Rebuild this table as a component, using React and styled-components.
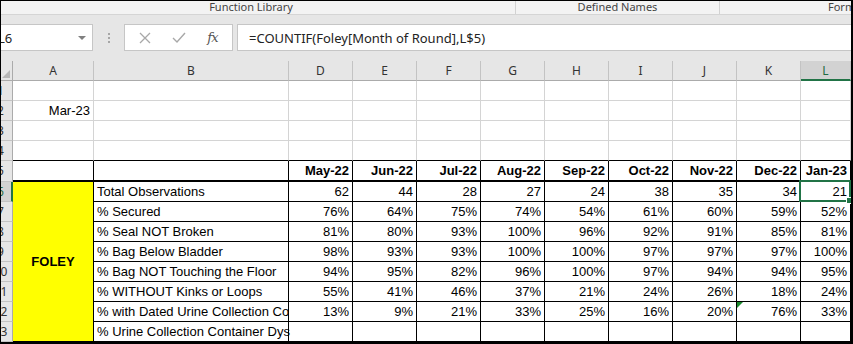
import React from "react";
import styled, { createGlobalStyle } from "styled-components";

const GlobalStyle = createGlobalStyle`
  html, body {
    margin: 0;
    padding: 0;
    background: #ffffff;
  }
  body {
    font-family: "Liberation Sans", Arial, sans-serif;
  }
`;

const months = ["May-22", "Jun-22", "Jul-22", "Aug-22", "Sep-22", "Oct-22", "Nov-22", "Dec-22", "Jan-23"];
const monthCols = ["D", "E", "F", "G", "H", "I", "J", "K", "L"];

const foleyRows = [
  { label: "Total Observations", values: ["62", "44", "28", "27", "24", "38", "35", "34", "21"] },
  { label: "% Secured", values: ["76%", "64%", "75%", "74%", "54%", "61%", "60%", "59%", "52%"] },
  { label: "% Seal NOT Broken", values: ["81%", "80%", "93%", "100%", "96%", "92%", "91%", "85%", "81%"] },
  { label: "% Bag Below Bladder", values: ["98%", "93%", "93%", "100%", "100%", "97%", "97%", "97%", "100%"] },
  { label: "% Bag NOT Touching the Floor", values: ["94%", "95%", "82%", "96%", "100%", "97%", "94%", "94%", "95%"] },
  { label: "% WITHOUT Kinks or Loops", values: ["55%", "41%", "46%", "37%", "21%", "24%", "26%", "18%", "24%"] },
  { label: "% with Dated Urine Collection Container", values: ["13%", "9%", "21%", "33%", "25%", "16%", "20%", "76%", "33%"] },
  { label: "% Urine Collection Container Dys", values: ["", "", "", "", "", "", "", "", ""], overflow: true },
];

const GREEN = "#217346";

const Frame = styled.div`
  width: 853px;
  height: 344px;
  box-sizing: border-box;
  border-top: 1px solid #000;
  border-left: 1px solid #000;
  border-right: 2px solid #000;
  border-bottom: 2px solid #000;
  overflow: hidden;
  background: #fff;
`;

const RibbonGroups = styled.div`
  display: flex;
  height: 14px;
  box-sizing: border-box;
  border-bottom: 1px solid #d5d5d5;
  background: #f3f3f3;
  font-family: "Noto Sans", "Open Sans", sans-serif;
  font-size: 11px;
  color: #444;
  line-height: 12px;
  white-space: nowrap;
`;

const Group = styled.div`
  width: ${(p) => p.$w}px;
  flex: none;
  box-sizing: border-box;
  text-align: ${(p) => p.$align || "center"};
  padding: 0 ${(p) => p.$pr || 0}px 0 ${(p) => p.$pl || 0}px;
  border-right: ${(p) => (p.$sep ? "1px solid #d2d2d2" : "none")};
  height: 13px;
  overflow: hidden;
`;

const FormulaBar = styled.div`
  display: flex;
  align-items: stretch;
  height: 46px;
  box-sizing: border-box;
  padding: 9px 0 10px 0;
  background: #e6e6e6;
  font-family: "Noto Sans", "Open Sans", sans-serif;
`;

const NameBox = styled.div`
  width: 92px;
  flex: none;
  box-sizing: border-box;
  background: #fff;
  border: 1px solid #c6c6c6;
  border-left: none;
  display: flex;
  align-items: center;
  justify-content: space-between;
  padding-right: 6px;
  font-size: 13px;
  color: #222;
`;

const NameText = styled.span`
  margin-left: -3px;
`;

const DropArrow = styled.span`
  width: 0;
  height: 0;
  border-left: 4px solid transparent;
  border-right: 4px solid transparent;
  border-top: 4px solid #808080;
`;

const Dots = styled.div`
  width: 31px;
  flex: none;
  display: flex;
  flex-direction: column;
  align-items: center;
  justify-content: center;
  gap: 2px;
  span {
    width: 2px;
    height: 2px;
    background: #a6a6a6;
  }
`;

const FxBox = styled.div`
  width: 109px;
  flex: none;
  box-sizing: border-box;
  background: #fff;
  border: 1px solid #c6c6c6;
  display: flex;
  align-items: center;
  justify-content: space-around;
  padding: 0 4px;
`;

const FxText = styled.span`
  font-family: "DejaVu Serif", "Liberation Serif", serif;
  font-style: italic;
  font-size: 13px;
  color: #555;
  letter-spacing: -1px;
`;

const FormulaInput = styled.div`
  flex: 1;
  margin-left: 4px;
  box-sizing: border-box;
  background: #fff;
  border: 1px solid #c6c6c6;
  border-right: none;
  display: flex;
  align-items: center;
  padding-left: 11px;
  font-size: 13px;
  color: #222;
  white-space: nowrap;
`;

const Sheet = styled.div`
  display: grid;
  grid-template-columns: 12px 81px 195px repeat(8, 64px) 50px;
  grid-template-rows: 20px repeat(4, 20px) 21px repeat(8, 20px);
  font-size: 13px;
  color: #000;
`;

const Corner = styled.div`
  position: relative;
  background: #e6e6e6;
  box-sizing: border-box;
  border-right: 1px solid #ababab;
  border-bottom: 1px solid #ababab;
  &::after {
    content: "";
    position: absolute;
    right: 2px;
    bottom: 2px;
    width: 0;
    height: 0;
    border-left: 8px solid transparent;
    border-bottom: 8px solid #b7b7b7;
  }
`;

const ColHead = styled.div`
  box-sizing: border-box;
  background: ${(p) => (p.$sel ? "#d2d2d2" : "#e6e6e6")};
  border-right: 1px solid #c3c3c3;
  border-bottom: ${(p) => (p.$sel ? `2px solid ${GREEN}` : "1px solid #ababab")};
  color: ${(p) => (p.$sel ? "#1e6b41" : "#333")};
  text-align: center;
  line-height: 19px;
  font-family: "Noto Sans", "Open Sans", sans-serif;
  font-size: 12px;
`;

const RowHead = styled.div`
  box-sizing: border-box;
  background: ${(p) => (p.$sel ? "#d2d2d2" : "#e6e6e6")};
  border-right: ${(p) => (p.$sel ? `2px solid ${GREEN}` : "1px solid #ababab")};
  border-bottom: 1px solid #c3c3c3;
  overflow: hidden;
  font-family: "Noto Sans", "Open Sans", sans-serif;
  font-size: 12px;
  color: ${(p) => (p.$sel ? "#1e6b41" : "#333")};
  span {
    display: block;
    width: 25px;
    margin-left: -13px;
    text-align: center;
    line-height: 20px;
  }
`;

const Cell = styled.div`
  position: relative;
  box-sizing: border-box;
  border-right: 1px solid ${(p) => (p.$boxed ? "#000" : "#d4d4d4")};
  border-bottom: ${(p) => (p.$thick ? 2 : 1)}px solid ${(p) => (p.$boxed || p.$topEdge ? "#000" : "#d4d4d4")};
  padding: 0 3px;
  line-height: 19px;
  white-space: nowrap;
  overflow: ${(p) => (p.$spill ? "visible" : "hidden")};
  text-align: ${(p) => p.$align || "left"};
  font-weight: ${(p) => (p.$bold ? 700 : 400)};
  z-index: ${(p) => (p.$spill ? 1 : 0)};
`;

const Merged = styled.div`
  grid-row: span 8;
  box-sizing: border-box;
  background: #ffff00;
  border-right: 1px solid #000;
  border-bottom: 1px solid #000;
  display: flex;
  align-items: center;
  justify-content: center;
  font-weight: 700;
`;

const Selection = styled.div`
  position: absolute;
  left: -2px;
  top: -2px;
  right: -1px;
  bottom: -1px;
  border: 2px solid ${GREEN};
  pointer-events: none;
  &::after {
    content: "";
    position: absolute;
    right: -4px;
    bottom: -4px;
    width: 5px;
    height: 5px;
    background: ${GREEN};
    border: 1px solid #fff;
  }
`;

const ErrorMark = styled.div`
  position: absolute;
  left: 0;
  top: 0;
  width: 0;
  height: 0;
  border-top: 6px solid #1a8a2e;
  border-right: 6px solid transparent;
`;

const XIcon = () => (
  <svg width="12" height="12" viewBox="0 0 12 12">
    <path d="M1 1 L11 11 M11 1 L1 11" stroke="#a8a8a8" strokeWidth="1.3" fill="none" />
  </svg>
);

const CheckIcon = () => (
  <svg width="14" height="12" viewBox="0 0 14 12">
    <path d="M1 6 L5 10 L13 1" stroke="#a8a8a8" strokeWidth="1.4" fill="none" />
  </svg>
);

const App = () => {
  const blankRows = [1, 2, 3, 4];

  return (
    <>
      <GlobalStyle />
      <Frame>
        <RibbonGroups>
          <Group $w={515} $pr={14} $sep>Function Library</Group>
          <Group $w={204} $sep>Defined Names</Group>
          <Group $w={131} $align="left" $pl={108}>Formula Auditing</Group>
        </RibbonGroups>

        <FormulaBar>
          <NameBox>
            <NameText>L6</NameText>
            <DropArrow />
          </NameBox>
          <Dots>
            <span />
            <span />
            <span />
          </Dots>
          <FxBox>
            <XIcon />
            <CheckIcon />
            <FxText>fx</FxText>
          </FxBox>
          <FormulaInput>=COUNTIF(Foley[Month of Round],L$5)</FormulaInput>
        </FormulaBar>

        <Sheet>
          <Corner />
          <ColHead>A</ColHead>
          <ColHead>B</ColHead>
          {monthCols.map((c) => (
            <ColHead key={c} $sel={c === "L"}>
              {c}
            </ColHead>
          ))}

          {blankRows.map((r) => (
            <React.Fragment key={r}>
              <RowHead>
                <span>{r}</span>
              </RowHead>
              <Cell $align="right" $topEdge={r === 4}>
                {r === 2 ? "Mar-23" : ""}
              </Cell>
              <Cell $topEdge={r === 4} />
              {monthCols.map((c) => (
                <Cell key={c} $topEdge={r === 4} />
              ))}
            </React.Fragment>
          ))}

          <RowHead>
            <span>5</span>
          </RowHead>
          <Cell $boxed $thick />
          <Cell $boxed $thick />
          {months.map((m) => (
            <Cell key={m} $boxed $thick $align="right" $bold>
              {m}
            </Cell>
          ))}

          {foleyRows.map((row, i) => {
            const r = i + 6;
            return (
              <React.Fragment key={row.label}>
                <RowHead $sel={r === 6}>
                  <span>{r}</span>
                </RowHead>
                {i === 0 && <Merged>FOLEY</Merged>}
                <Cell $boxed $spill={row.overflow}>
                  {row.label}
                </Cell>
                {row.values.map((v, j) => {
                  const col = monthCols[j];
                  const selected = r === 6 && col === "L";
                  return (
                    <Cell key={col} $boxed $align="right" $spill={selected}>
                      {r === 12 && col === "K" && <ErrorMark />}
                      {v}
                      {selected && <Selection />}
                    </Cell>
                  );
                })}
              </React.Fragment>
            );
          })}
        </Sheet>
      </Frame>
    </>
  );
};

export default App;
